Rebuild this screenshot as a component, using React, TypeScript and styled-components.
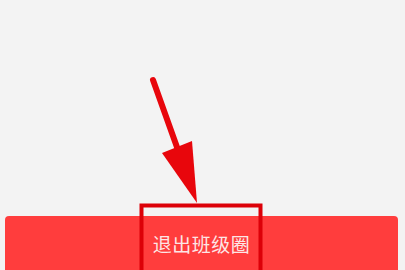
import styled, { createGlobalStyle } from "styled-components";

const GlobalStyle = createGlobalStyle`
  html, body {
    margin: 0;
    padding: 0;
    background: #f3f3f3;
  }
`;

const Page = styled.div`
  position: relative;
  width: 405px;
  height: 270px;
  overflow: hidden;
  background: #f3f3f3;
  display: flex;
  flex-direction: column;
  justify-content: flex-end;
  padding: 0 7px 0 5px;
  box-sizing: border-box;
`;

const QuitButton = styled.button`
  height: 56px;
  margin-bottom: -2px;
  border: none;
  border-radius: 4px 4px 0 0;
  background: #ff3d3d;
  color: #fde6e6;
  font-family: "Noto Sans CJK SC", "Noto Sans", sans-serif;
  font-size: 19px;
  letter-spacing: 0.5px;
  display: flex;
  align-items: center;
  justify-content: center;
  padding: 0 0 2px 0;
  cursor: pointer;
`;

const Annotation = styled.svg`
  position: absolute;
  left: 0;
  top: 0;
  width: 405px;
  height: 270px;
  pointer-events: none;
`;

const mark = "#e8060c";

export default function App() {
  return (
    <>
      <GlobalStyle />
      <Page>
        <QuitButton>退出班级圈</QuitButton>
        <Annotation viewBox="0 0 405 270">
          <line x1="153" y1="80" x2="178" y2="150" stroke={mark} strokeWidth="6" strokeLinecap="round" />
          <polygon points="162,153 192,141 197,203" fill={mark} />
          <rect x="141.5" y="205.5" width="119" height="70" fill="none" stroke="#dc0008" strokeWidth="4" />
        </Annotation>
      </Page>
    </>
  );
}
